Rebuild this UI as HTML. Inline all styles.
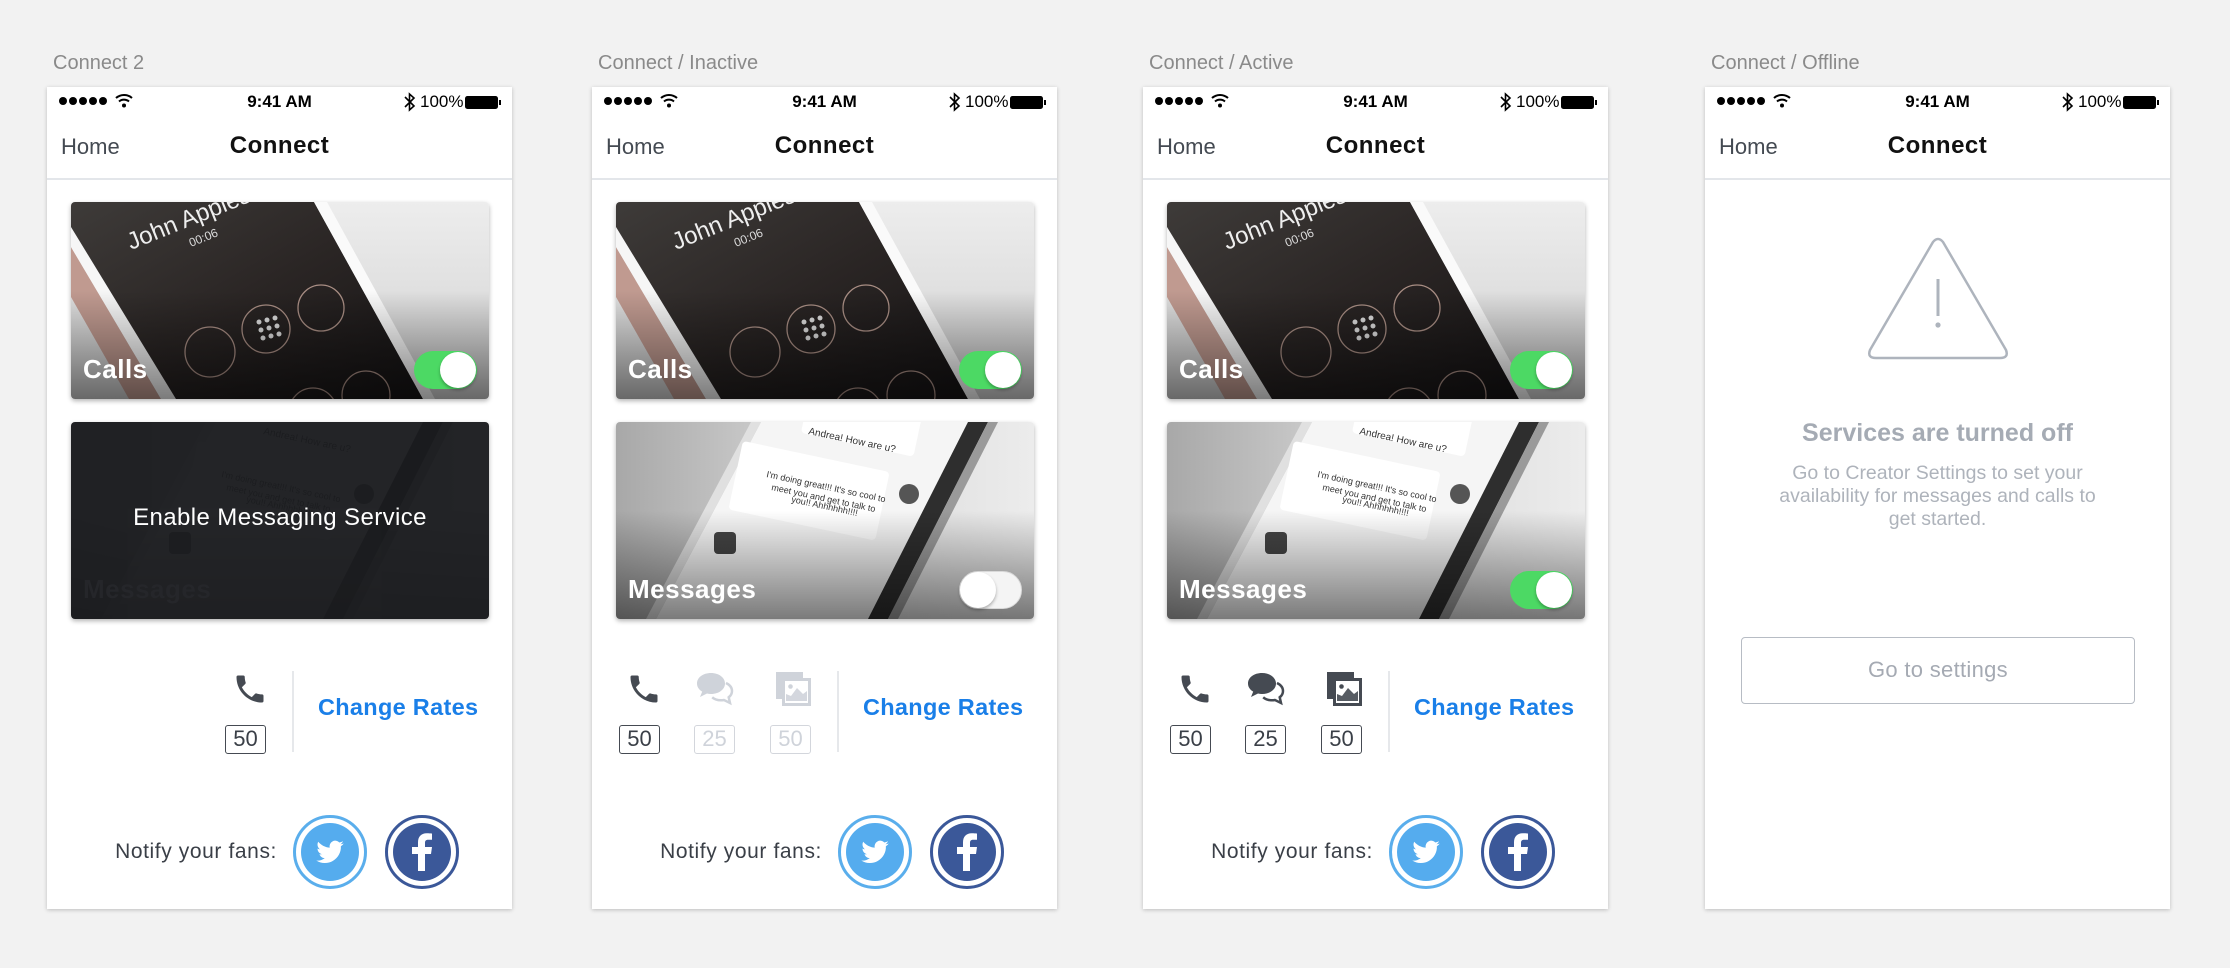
<!DOCTYPE html>
<html><head><meta charset="utf-8">
<style>
*{margin:0;padding:0;box-sizing:border-box}
body{width:2230px;height:968px;background:#f2f2f2;font-family:"Liberation Sans",sans-serif;position:relative;overflow:hidden}
.lbl{position:absolute;top:52px;font-size:20px;color:#8a8a8a}
.p{position:absolute;top:87px;width:465px;height:822px;background:#fff;box-shadow:0 1px 4px rgba(0,0,0,.22)}
.a{position:absolute}
.sb{position:absolute;top:0;left:0;width:465px;height:28px;font-size:17px;color:#000}
.time{position:absolute;left:0;width:465px;top:5px;text-align:center;font-weight:bold}
.pct{position:absolute;left:373px;top:5px}
.home{position:absolute;left:14px;top:47px;font-size:22px;color:#444a52}
.ttl{position:absolute;left:0;width:465px;text-align:center;top:45px;font-size:24px;font-weight:bold;color:#111;letter-spacing:.5px}
.nl{position:absolute;left:0;top:91px;width:465px;height:2px;background:#e3e6ea}
.card{position:absolute;left:24px;width:418px;height:197px;border-radius:4px;overflow:hidden;box-shadow:0 2px 5px rgba(0,0,0,.3)}
.c1{top:115px}.c2{top:335px}
.clab{position:absolute;left:12px;bottom:14px;font-size:26px;color:#fff;font-weight:bold;letter-spacing:.5px}
.tg{position:absolute;right:12px;bottom:10px;width:63px;height:38px;border-radius:19px;background:#4cd964}
.tg:after{content:"";position:absolute;right:1px;top:1px;width:36px;height:36px;border-radius:50%;background:#fff;box-shadow:0 2px 3px rgba(0,0,0,.3)}
.tg.off{background:#f4f4f4;border:1px solid #d9d9d9}
.tg.off:after{right:auto;left:0;top:0}
.ic{position:absolute;top:584px;width:40px;height:36px}
.bx{position:absolute;top:638px;width:41px;height:29px;border:1.5px solid #454a52;border-radius:3px;font-size:22px;color:#3a3f47;text-align:center;line-height:26px}
.bx.dim{border-color:#d3d6dc;color:#cfd3da}
.dv{position:absolute;left:245px;top:584px;width:2px;height:81px;background:#e6e8eb}
.cr{position:absolute;left:271px;top:607px;font-size:23.5px;color:#1a7fe8;font-weight:bold;letter-spacing:.3px}
.nf{position:absolute;right:235px;top:753px;font-size:21px;letter-spacing:.6px;color:#3a3f47;white-space:nowrap}
.tw,.fb{position:absolute;top:728px;width:74px;height:74px;border-radius:50%;background:#fff}
.tw{left:246px;border:3px solid #5aaeec}.fb{left:338px;border:3px solid #3b5899}
.tw i,.fb i{position:absolute;left:5px;top:5px;width:58px;height:58px;border-radius:50%}
.tw i{background:#55acee}.fb i{background:#3b5899}
</style></head><body>
<svg width="0" height="0" style="position:absolute">
<defs>
<linearGradient id="bg1" x1="0" y1="0" x2="0" y2="1"><stop offset="0" stop-color="#ededed"/><stop offset="1" stop-color="#d0d0d0"/></linearGradient>
<linearGradient id="scr" x1="0" y1="0" x2="1" y2="1"><stop offset="0" stop-color="#3e3b39"/><stop offset=".5" stop-color="#2a2524"/><stop offset="1" stop-color="#151314"/></linearGradient>
<linearGradient id="ov" x1="0" y1="0" x2="0" y2="1"><stop offset=".45" stop-color="#000" stop-opacity="0"/><stop offset="1" stop-color="#000" stop-opacity=".5"/></linearGradient>
<linearGradient id="bg2" x1="0" y1="0" x2="1" y2="0"><stop offset="0" stop-color="#a8a8a8"/><stop offset=".5" stop-color="#d8d8d8"/><stop offset="1" stop-color="#ececec"/></linearGradient>
<symbol id="calls" viewBox="0 0 418 197">
<rect width="418" height="197" fill="url(#bg1)"/>
<polygon points="0,45 90,197 58,197 0,95" fill="#c09a90"/>
<polygon points="0,25 105,197 90,197 0,45" fill="#f6f6f6"/>
<polygon points="0,0 243,0 352,197 105,197 0,25" fill="url(#scr)"/>
<polygon points="243,0 256,0 364,197 352,197" fill="#fafafa"/>
<text x="60" y="48" transform="rotate(-22 60 48)" fill="#eee" font-size="24" font-family="Liberation Sans">John Applese</text>
<text x="120" y="45" transform="rotate(-22 120 45)" fill="#ddd" font-size="12" font-family="Liberation Sans">00:06</text>
<g fill="none" stroke="#a98e84" stroke-width="1.3"><circle cx="139" cy="150" r="25"/><circle cx="195" cy="127" r="24"/><circle cx="250" cy="106" r="23"/><circle cx="295" cy="193" r="24"/><circle cx="242" cy="210" r="24"/></g>
<g fill="#ddd"><circle cx="188" cy="120" r="2.5"/><circle cx="196" cy="118" r="2.5"/><circle cx="204" cy="116" r="2.5"/><circle cx="190" cy="128" r="2.5"/><circle cx="198" cy="126" r="2.5"/><circle cx="206" cy="124" r="2.5"/><circle cx="192" cy="136" r="2.5"/><circle cx="200" cy="134" r="2.5"/><circle cx="208" cy="132" r="2.5"/></g>
<rect width="418" height="197" fill="url(#ov)"/>
</symbol>
<symbol id="msgs" viewBox="0 0 418 197">
<rect width="418" height="197" fill="url(#bg2)"/>
<polygon points="145,0 362,0 262,197 40,197" fill="#f5f5f5"/>
<polygon points="135,0 145,0 40,197 30,197" fill="#e0e0e0"/>
<polygon points="352,0 372,0 272,197 252,197" fill="#2e2e2e"/>
<polygon points="372,0 382,0 282,197 272,197" fill="#9a9a9a"/>
<g transform="rotate(12 200 60)"><rect x="175" y="-25" width="115" height="40" rx="4" fill="#fff"/><rect x="120" y="35" width="150" height="70" rx="4" fill="#fff"/></g>
<text x="192" y="12" transform="rotate(12 192 12)" font-size="10" fill="#333" font-family="Liberation Sans">Andrea! How are u?</text>
<text x="150" y="55" transform="rotate(12 150 55)" font-size="9" fill="#333" font-family="Liberation Sans">I'm doing great!!! It's so cool to</text>
<text x="155" y="68" transform="rotate(12 155 68)" font-size="9" fill="#333" font-family="Liberation Sans">meet you and get to talk to</text>
<text x="175" y="80" transform="rotate(12 175 80)" font-size="9" fill="#333" font-family="Liberation Sans">you!! Ahhhhhh!!!!</text>
<rect x="98" y="110" width="22" height="22" rx="4" fill="#444"/><circle cx="293" cy="72" r="10" fill="#555"/>
<rect width="418" height="197" fill="url(#ov)"/>
</symbol>
<symbol id="phone" viewBox="0 0 24 24"><path fill="currentColor" d="M6.6 10.8c1.4 2.8 3.8 5.1 6.6 6.6l2.2-2.2c.3-.3.7-.4 1-.2 1.1.4 2.3.6 3.6.6.6 0 1 .4 1 1V20c0 .6-.4 1-1 1C10.6 21 3 13.4 3 4c0-.6.4-1 1-1h3.5c.6 0 1 .4 1 1 0 1.3.2 2.5.6 3.6.1.3 0 .7-.2 1z"/></symbol>
<symbol id="chat" viewBox="0 0 40 36"><path fill="currentColor" d="M16 2C8 2 2 6.5 2 12.5c0 3.5 2 6.3 5.2 8.1L5 26l7-3.5c1.3.3 2.6.5 4 .5 8 0 14-4.7 14-10.5S24 2 16 2z"/><path fill="none" stroke="currentColor" stroke-width="2.5" d="M31 12c3.5 1.7 6 4.5 6 8 0 2.5-1.2 4.7-3.3 6.3L35 32l-6-3c-1.1.2-2.1.3-3.2.3-3.5 0-6.6-1.2-8.6-3"/></symbol>
<symbol id="img" viewBox="0 0 40 36"><path fill="currentColor" d="M4 1h27v6H10v21H4z"/><rect x="11.5" y="8.5" width="26" height="25" fill="none" stroke="currentColor" stroke-width="3"/><path fill="currentColor" d="M14 30v-7l5 2 6-8 6 6 4-3v10z" opacity=".9"/><circle cx="18.5" cy="15.5" r="2.3" fill="currentColor"/></symbol>
<symbol id="bird" viewBox="0 0 24 24"><path fill="#fff" d="M23 5.1c-.8.4-1.7.6-2.6.7.9-.6 1.6-1.4 2-2.5-.9.5-1.9.9-2.9 1.1a4.5 4.5 0 0 0-7.7 4.1C8.1 8.3 4.8 6.5 2.6 3.8c-1.2 2.1-.5 4.7 1.4 6-.7 0-1.4-.2-2-.6 0 2.2 1.5 4.1 3.6 4.5-.7.2-1.4.2-2 .1.6 1.8 2.3 3.1 4.2 3.1A9 9 0 0 1 1 18.8 12.8 12.8 0 0 0 20.7 7.4c.9-.6 1.7-1.4 2.3-2.3z"/></symbol>
<symbol id="fbf" viewBox="0 0 58 58"><path fill="#fff" d="M32 48V31h6l1-7h-7v-4c0-2 .6-3.2 3.4-3.2H39v-6.3c-.6-.1-2.8-.3-5.3-.3-5.3 0-8.7 3.200-8.7 9v4.800h-6v7h6v17z"/></symbol>
<symbol id="sbl" viewBox="0 0 90 16"><g fill="#000"><circle cx="6" cy="8" r="4"/><circle cx="16" cy="8" r="4"/><circle cx="26" cy="8" r="4"/><circle cx="36" cy="8" r="4"/><circle cx="46" cy="8" r="4"/></g><g fill="none" stroke="#000" stroke-width="2"><path d="M59 5a12 12 0 0 1 16 0"/><path d="M62 8.5a7.5 7.5 0 0 1 10 0"/></g><circle cx="67" cy="12.5" r="2" fill="#000"/></symbol>
<symbol id="sbr" viewBox="0 0 100 20"><path d="M3 5l9 9-4.5 4V2L12 6 3 15" fill="none" stroke="#000" stroke-width="1.6"/><rect x="63" y="4" width="33" height="13" rx="2.5" fill="#000"/><rect x="97" y="8" width="2" height="5" fill="#000"/></symbol>
</defs></svg>

<!-- Panel 1 -->
<div class="lbl" style="left:53px">Connect 2</div>
<div class="p" style="left:47px">
 <div class="sb"><svg class="a" style="left:10px;top:6px" width="90" height="16"><use href="#sbl"/></svg><div class="time">9:41 AM</div><svg class="a" style="left:355px;top:5px" width="100" height="20"><use href="#sbr"/></svg><div class="pct">100%</div></div>
 <div class="home">Home</div><div class="ttl">Connect</div><div class="nl"></div>
 <div class="card c1"><svg width="418" height="197"><use href="#calls"/></svg><div class="clab">Calls</div><div class="tg"></div></div>
 <div class="card c2" style="background:#1b1c1f"><svg width="418" height="197" style="opacity:.04"><use href="#msgs"/></svg><div class="clab" style="color:#25262a">Messages</div><div class="a" style="left:0;width:418px;top:82px;text-align:center;color:#fff;font-size:24px;letter-spacing:.4px">Enable Messaging Service</div></div>
 <svg class="ic" style="left:183px;color:#454a52" width="32" height="34" viewBox="0 0 24 24"><use href="#phone"/></svg>
 <div class="bx" style="left:178px">50</div>
 <div class="dv"></div><div class="cr">Change Rates</div>
 <div class="nf">Notify your fans:</div>
 <div class="tw"><i><svg class="a" style="left:13px;top:14px" width="32" height="30"><use href="#bird"/></svg></i></div>
 <div class="fb"><i><svg class="a" style="left:0;top:0" width="58" height="58"><use href="#fbf"/></svg></i></div>
</div>

<!-- Panel 2 -->
<div class="lbl" style="left:598px">Connect / Inactive</div>
<div class="p" style="left:592px">
 <div class="sb"><svg class="a" style="left:10px;top:6px" width="90" height="16"><use href="#sbl"/></svg><div class="time">9:41 AM</div><svg class="a" style="left:355px;top:5px" width="100" height="20"><use href="#sbr"/></svg><div class="pct">100%</div></div>
 <div class="home">Home</div><div class="ttl">Connect</div><div class="nl"></div>
 <div class="card c1"><svg width="418" height="197"><use href="#calls"/></svg><div class="clab">Calls</div><div class="tg"></div></div>
 <div class="card c2"><svg width="418" height="197"><use href="#msgs"/></svg><div class="clab">Messages</div><div class="tg off"></div></div>
 <svg class="ic" style="left:32px;color:#454a52" width="32" height="34" viewBox="0 0 24 24"><use href="#phone"/></svg>
 <svg class="ic" style="left:103px;color:#cfd3da" width="40" height="36"><use href="#chat"/></svg>
 <svg class="ic" style="left:180px;color:#cfd3da" width="40" height="36"><use href="#img"/></svg>
 <div class="bx" style="left:27px">50</div><div class="bx dim" style="left:102px">25</div><div class="bx dim" style="left:178px">50</div>
 <div class="dv"></div><div class="cr">Change Rates</div>
 <div class="nf">Notify your fans:</div>
 <div class="tw"><i><svg class="a" style="left:13px;top:14px" width="32" height="30"><use href="#bird"/></svg></i></div>
 <div class="fb"><i><svg class="a" style="left:0;top:0" width="58" height="58"><use href="#fbf"/></svg></i></div>
</div>

<!-- Panel 3 -->
<div class="lbl" style="left:1149px">Connect / Active</div>
<div class="p" style="left:1143px">
 <div class="sb"><svg class="a" style="left:10px;top:6px" width="90" height="16"><use href="#sbl"/></svg><div class="time">9:41 AM</div><svg class="a" style="left:355px;top:5px" width="100" height="20"><use href="#sbr"/></svg><div class="pct">100%</div></div>
 <div class="home">Home</div><div class="ttl">Connect</div><div class="nl"></div>
 <div class="card c1"><svg width="418" height="197"><use href="#calls"/></svg><div class="clab">Calls</div><div class="tg"></div></div>
 <div class="card c2"><svg width="418" height="197"><use href="#msgs"/></svg><div class="clab">Messages</div><div class="tg"></div></div>
 <svg class="ic" style="left:32px;color:#454a52" width="32" height="34" viewBox="0 0 24 24"><use href="#phone"/></svg>
 <svg class="ic" style="left:103px;color:#454a52" width="40" height="36"><use href="#chat"/></svg>
 <svg class="ic" style="left:180px;color:#454a52" width="40" height="36"><use href="#img"/></svg>
 <div class="bx" style="left:27px">50</div><div class="bx" style="left:102px">25</div><div class="bx" style="left:178px">50</div>
 <div class="dv"></div><div class="cr">Change Rates</div>
 <div class="nf">Notify your fans:</div>
 <div class="tw"><i><svg class="a" style="left:13px;top:14px" width="32" height="30"><use href="#bird"/></svg></i></div>
 <div class="fb"><i><svg class="a" style="left:0;top:0" width="58" height="58"><use href="#fbf"/></svg></i></div>
</div>

<!-- Panel 4 -->
<div class="lbl" style="left:1711px">Connect / Offline</div>
<div class="p" style="left:1705px">
 <div class="sb"><svg class="a" style="left:10px;top:6px" width="90" height="16"><use href="#sbl"/></svg><div class="time">9:41 AM</div><svg class="a" style="left:355px;top:5px" width="100" height="20"><use href="#sbr"/></svg><div class="pct">100%</div></div>
 <div class="home">Home</div><div class="ttl">Connect</div><div class="nl"></div>
 <svg class="a" style="left:162px;top:150px" width="142" height="124" viewBox="0 0 142 124"><path d="M66 5Q71 -1 76 5L139 113Q142 121 133 121H9Q0 121 3 113Z" fill="none" stroke="#aeb4bd" stroke-width="2.5" stroke-linejoin="round"/><rect x="69.5" y="42" width="3" height="37" fill="#aeb4bd"/><circle cx="71" cy="88" r="2.6" fill="#aeb4bd"/></svg>
 <div class="a" style="left:0;width:465px;top:332px;text-align:center;font-size:25px;font-weight:bold;color:#a5abb4">Services are turned off</div>
 <div class="a" style="left:0;width:465px;top:375px;text-align:center;font-size:19.5px;line-height:23px;color:#aeb3bb">Go to Creator Settings to set your<br>availability for messages and calls to<br>get started.</div>
 <div class="a" style="left:36px;top:550px;width:394px;height:67px;border:1.5px solid #b7bcc4;border-radius:4px;text-align:center;line-height:64px;font-size:22px;color:#a5aab3;letter-spacing:.3px">Go to settings</div>
</div>
</body></html>
